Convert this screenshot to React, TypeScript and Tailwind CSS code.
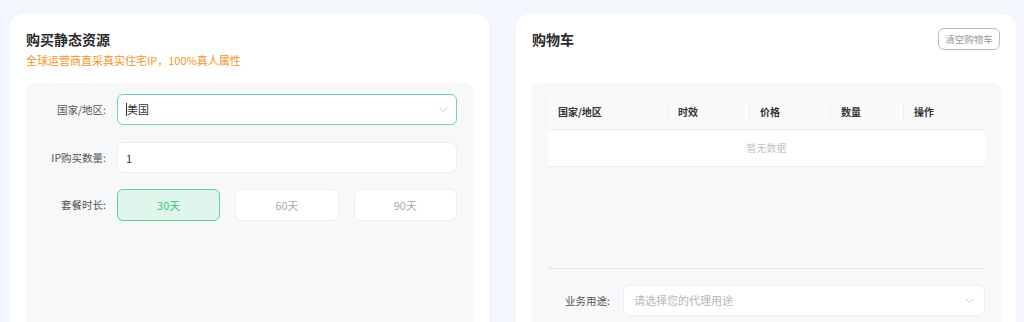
import React, { useState } from 'react';

const font = { fontFamily: '"Noto Sans CJK SC", "Noto Sans", sans-serif' };

const Chevron = () => (
  <svg width="9" height="5" viewBox="0 0 9 5" fill="none" className="shrink-0">
    <polyline points="0.5,0.5 4.5,4.5 8.5,0.5" stroke="#c8cbd1" strokeWidth="1" />
  </svg>
);

const durations = ['30天', '60天', '90天'];
const columns = [
  { label: '国家/地区', w: 'w-[119px]' },
  { label: '时效', w: 'w-[82px]' },
  { label: '价格', w: 'w-[81px]' },
  { label: '数量', w: 'w-[73px]' },
  { label: '操作', w: 'flex-1' },
];

const App: React.FC = () => {
  const [duration, setDuration] = useState('30天');
  const [qty, setQty] = useState('1');

  return (
    <div className="w-[1024px] h-[322px] overflow-hidden bg-[#f3f6fd] flex gap-[27px] pl-[10px] pt-[14px]" style={font}>
      {/* Left: buy form */}
      <div className="w-[479px] h-[340px] bg-white rounded-[14px] px-4 pt-[15px] flex flex-col">
        <h2 className="text-[14px] leading-5 font-bold text-[#2a2a2a]">购买静态资源</h2>
        <p className="text-[11px] leading-4 mt-[3px] text-[#f7921f]">全球运营商直采真实住宅IP，100%真人属性</p>

        <div className="mt-[15px] flex-1 bg-[#f7f8fa] rounded-lg pt-[11px] pr-4 flex flex-col gap-[17px]">
          <div className="flex items-center">
            <label className="w-[80px] text-right text-[10.5px] text-[#555]">国家/地区:</label>
            <div className="ml-[11px] flex-1 h-[31px] bg-white border border-[#6fd6a4] rounded-md flex items-center px-2">
              <span className="w-px h-[13px] bg-[#333]"></span>
              <span className="flex-1 text-[11px] text-[#333]">美国</span>
              <Chevron />
            </div>
          </div>

          <div className="flex items-center">
            <label className="w-[80px] text-right text-[10.5px] text-[#555]">IP购买数量:</label>
            <input
              value={qty}
              onChange={e => setQty(e.target.value)}
              className="ml-[11px] flex-1 h-[31px] bg-white border border-[#eceef2] rounded-md px-2 text-[11px] text-[#333] outline-none"
            />
          </div>

          <div className="flex items-center -mt-px">
            <label className="w-[80px] text-right text-[10.5px] text-[#555]">套餐时长:</label>
            <div className="ml-[11px] flex-1 grid grid-cols-3 gap-[15px]">
              {durations.map(d => (
                <button
                  key={d}
                  onClick={() => setDuration(d)}
                  className={`h-[32px] rounded-md border text-[11px] ${
                    duration === d
                      ? 'bg-[#e0f5eb] border-[#62d29a] text-[#3fc383]'
                      : 'bg-white border-[#eceef2] text-[#aaa]'
                  }`}
                >
                  {d}
                </button>
              ))}
            </div>
          </div>
        </div>
      </div>

      {/* Right: cart */}
      <div className="w-[500px] h-[340px] bg-white rounded-[14px] pl-4 pr-[15px] pt-[15px] flex flex-col">
        <div className="flex items-start justify-between">
          <h2 className="text-[14px] leading-5 font-bold text-[#2a2a2a]">购物车</h2>
          <button className="w-[62px] h-[22px] mt-[-1px] mr-px rounded-md border border-[#b9bcc3] text-[9.5px] text-[#999]">清空购物车</button>
        </div>

        <div className="mt-[33px] flex-1 bg-[#f7f8fa] rounded-lg px-4 pt-[11px] flex flex-col">
          <div className="flex h-[36px] items-center bg-[#fafafa] border-b border-[#ebeef5]">
            {columns.map((c, i) => (
              <div key={c.label} className={`${c.w} h-[14px] flex items-center pl-[10px] ${i > 0 ? 'border-l border-[#ebeef5]' : ''}`}>
                <span className="text-[10px] font-bold text-[#333]">{c.label}</span>
              </div>
            ))}
          </div>
          <div className="h-[37px] pb-[2px] bg-white border-b border-[#ebeef5] flex items-center justify-center text-[10px] text-[#c0c4cc]">
            暂无数据
          </div>

          <div className="mt-[101px] border-t border-[#e6e8ec]"></div>

          <div className="mt-4 flex items-center">
            <label className="w-[62px] text-right text-[10.5px] text-[#555]">业务用途:</label>
            <div className="ml-[13px] flex-1 h-[31px] bg-white border border-[#eceef2] rounded-md flex items-center px-[10px]">
              <span className="flex-1 text-[11px] text-[#b4b7bd]">请选择您的代理用途</span>
              <Chevron />
            </div>
          </div>
        </div>
      </div>
    </div>
  );
};

export default App;
